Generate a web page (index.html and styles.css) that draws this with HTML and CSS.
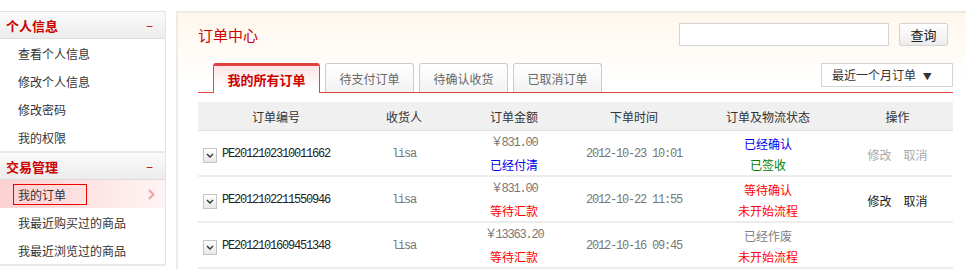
FILE: index.html
```html
<!DOCTYPE html>
<html lang="zh-CN">
<head>
    <meta charset="UTF-8">
    <title>订单中心</title>
    <link rel="stylesheet" href="styles.css">
</head>
<body>
    <div class="page">
        <div class="sidebar">
            <div class="side-group">
                <div class="side-head">个人信息<span class="fold">−</span></div>
                <a class="side-item">查看个人信息</a>
                <a class="side-item">修改个人信息</a>
                <a class="side-item">修改密码</a>
                <a class="side-item">我的权限</a>
            </div>
            <div class="side-group">
                <div class="side-head">交易管理<span class="fold">−</span></div>
                <a class="side-item current"><span class="mark">我的订单</span><svg class="arrow" width="7" height="11" viewBox="0 0 7 11"><path d="M1 1l4.5 4.5L1 10" fill="none" stroke="#f4a0a0" stroke-width="2"/></svg></a>
                <a class="side-item">我最近购买过的商品</a>
                <a class="side-item">我最近浏览过的商品</a>
            </div>
        </div>

        <div class="main">
            <div class="main-top">
                <h2 class="title">订单中心</h2>
                <input type="text" class="search-input">
                <button type="button" class="search-btn">查询</button>
            </div>

            <div class="tabs">
                <a class="tab active">我的所有订单</a>
                <a class="tab">待支付订单</a>
                <a class="tab">待确认收货</a>
                <a class="tab">已取消订单</a>
                <div class="period">最近一个月订单 <span class="caret">▼</span></div>
            </div>

            <table class="orders">
                <thead>
                    <tr>
                        <th class="c-no">订单编号</th>
                        <th class="c-man">收货人</th>
                        <th class="c-sum">订单金额</th>
                        <th class="c-time">下单时间</th>
                        <th class="c-state">订单及物流状态</th>
                        <th class="c-op">操作</th>
                    </tr>
                </thead>
                <tbody>
                    <tr>
                        <td class="c-no"><span class="toggle"><svg width="8" height="5" viewBox="0 0 8 5"><path d="M1 1l3 3 3-3" fill="none" stroke="#333" stroke-width="1.4"/></svg></span><span class="num">PE2012102310011662</span></td>
                        <td class="num">lisa</td>
                        <td><div class="num">￥831.00</div><div class="blue">已经付清</div></td>
                        <td class="num">2012-10-23 10:01</td>
                        <td><div class="blue">已经确认</div><div class="green">已签收</div></td>
                        <td class="ops off"><a>修改</a><a>取消</a></td>
                    </tr>
                    <tr>
                        <td class="c-no"><span class="toggle"><svg width="8" height="5" viewBox="0 0 8 5"><path d="M1 1l3 3 3-3" fill="none" stroke="#333" stroke-width="1.4"/></svg></span><span class="num">PE2012102211550946</span></td>
                        <td class="num">lisa</td>
                        <td><div class="num">￥831.00</div><div class="red">等待汇款</div></td>
                        <td class="num">2012-10-22 11:55</td>
                        <td><div class="red">等待确认</div><div class="red">未开始流程</div></td>
                        <td class="ops"><a>修改</a><a>取消</a></td>
                    </tr>
                    <tr>
                        <td class="c-no"><span class="toggle"><svg width="8" height="5" viewBox="0 0 8 5"><path d="M1 1l3 3 3-3" fill="none" stroke="#333" stroke-width="1.4"/></svg></span><span class="num">PE2012101609451348</span></td>
                        <td class="num">lisa</td>
                        <td><div class="num">￥13363.20</div><div class="red">等待汇款</div></td>
                        <td class="num">2012-10-16 09:45</td>
                        <td><div class="gray">已经作废</div><div class="red">未开始流程</div></td>
                        <td class="ops"></td>
                    </tr>
                </tbody>
            </table>
        </div>
    </div>
</body>
</html>
```

FILE: styles.css
```css
body {
    margin: 0;
    font-family: "Noto Sans CJK SC", "Noto Sans", sans-serif;
    font-size: 12px;
    color: #333;
    background: #fff;
}

.page {
    display: flex;
    align-items: flex-start;
    margin-top: 11px;
}

/* sidebar */
.sidebar {
    width: 165px;
    border-right: 1px solid #e4e4e4;
    border-bottom: 2px solid #e8e8e8;
}

.side-group {
    border-top: 1px solid #e4e4e4;
}

.side-group + .side-group {
    border-top: 2px solid #e8e8e8;
}

.side-head {
    display: flex;
    justify-content: space-between;
    align-items: center;
    height: 26px;
    padding: 0 12px 0 6px;
    font-size: 13px;
    font-weight: bold;
    color: #cc0000;
    background: linear-gradient(#fbfbfb, #ececec);
    border-bottom: 1px solid #dcdcdc;
}

.fold {
    font-weight: normal;
    font-size: 12px;
    color: #b00;
}

.side-item {
    display: flex;
    align-items: center;
    justify-content: space-between;
    height: 28px;
    padding: 0 10px 0 18px;
    font-size: 12px;
    color: #333;
}

.side-item.current {
    padding-left: 13px;
    background: linear-gradient(to right, #fdd0d0, #fff4f4);
}

.mark {
    display: block;
    width: 68px;
    height: 19px;
    line-height: 19px;
    padding-left: 4px;
    border: 1px solid #ee0000;
}

/* main panel */
.main {
    flex: 1;
    margin-left: 10px;
    padding: 0 13px 0 20px;
    border-top: 2px solid #eeebe6;
    border-left: 2px solid #eeebe6;
    background: linear-gradient(#fff7ec, #fff 70px);
}

.main-top {
    display: flex;
    align-items: center;
    padding-top: 10px;
}

.title {
    flex: 1;
    margin: 0;
    font-size: 15px;
    font-weight: normal;
    color: #cc0000;
}

.search-input {
    width: 206px;
    height: 19px;
    padding: 1px;
    border: 1px solid #d4d4d4;
    margin: 0;
}

.search-btn {
    width: 49px;
    height: 23px;
    margin: 0 5px 0 10px;
    padding: 0;
    font-family: inherit;
    font-size: 13px;
    color: #222;
    border: 1px solid #d4d4d4;
    border-radius: 2px;
    background: linear-gradient(#fff, #ececec);
}

.tabs {
    display: flex;
    align-items: flex-end;
    margin-top: 17px;
    padding-left: 15px;
    height: 29px;
    border-bottom: 1px solid #e64545;
}

.tab {
    display: flex;
    align-items: center;
    justify-content: center;
    width: 87px;
    height: 28px;
    margin-right: 5px;
    font-size: 12px;
    color: #666;
    border: 1px solid #cbcbcb;
    border-bottom: none;
    border-radius: 3px 3px 0 0;
    background: linear-gradient(#fff, #f2f2f2);
}

.tab.active {
    width: 105px;
    height: 27px;
    margin-bottom: -1px;
    font-size: 13px;
    font-weight: bold;
    color: #cc0000;
    border-color: #e64545;
    border-top: 3px solid #e04040;
    background: linear-gradient(#fde4e4, #fff 22px);
}

.period {
    align-self: flex-start;
    margin-left: auto;
    width: 120px;
    height: 22px;
    line-height: 22px;
    padding-left: 10px;
    font-size: 12px;
    color: #333;
    border: 1px solid #d4d4d4;
    background: #fff;
}

.caret {
    font-size: 9px;
    margin-left: 4px;
}

/* table */
.orders {
    width: 100%;
    margin-top: 9px;
    border-collapse: separate;
    border-spacing: 0;
    table-layout: fixed;
}

.orders th {
    height: 28px;
    padding: 0;
    font-weight: normal;
    font-size: 12px;
    color: #333;
    background: #f0f0f0;
    border-bottom: 1px solid #e4e2dc;
}

.orders td {
    height: 41px;
    padding: 2px 0 0;
    text-align: center;
    line-height: 21px;
    border-bottom: 2px solid #ececec;
}

.c-no { width: 156px; }
.c-man { width: 100px; }
.c-sum { width: 120px; }
.c-time { width: 120px; }
.c-state { width: 148px; }

.orders td.c-no {
    text-align: left;
    padding-left: 5px;
}

.toggle {
    display: inline-flex;
    align-items: center;
    justify-content: center;
    width: 12px;
    height: 13px;
    margin-right: 5px;
    vertical-align: middle;
    border: 1px solid #c4c4c4;
    background: linear-gradient(#fff, #e8e8e8);
}

.num {
    font-family: "Liberation Mono", monospace;
    font-size: 12px;
    letter-spacing: -1.2px;
    color: #777;
}

.c-no .num {
    color: #222;
    vertical-align: middle;
}

.blue { color: #0000ee; }
.green { color: #008000; }
.red { color: #ff0000; }
.gray { color: #808080; }

.ops a {
    margin: 0 6px;
    color: #222;
}

.ops.off a {
    color: #aaa;
}
```
